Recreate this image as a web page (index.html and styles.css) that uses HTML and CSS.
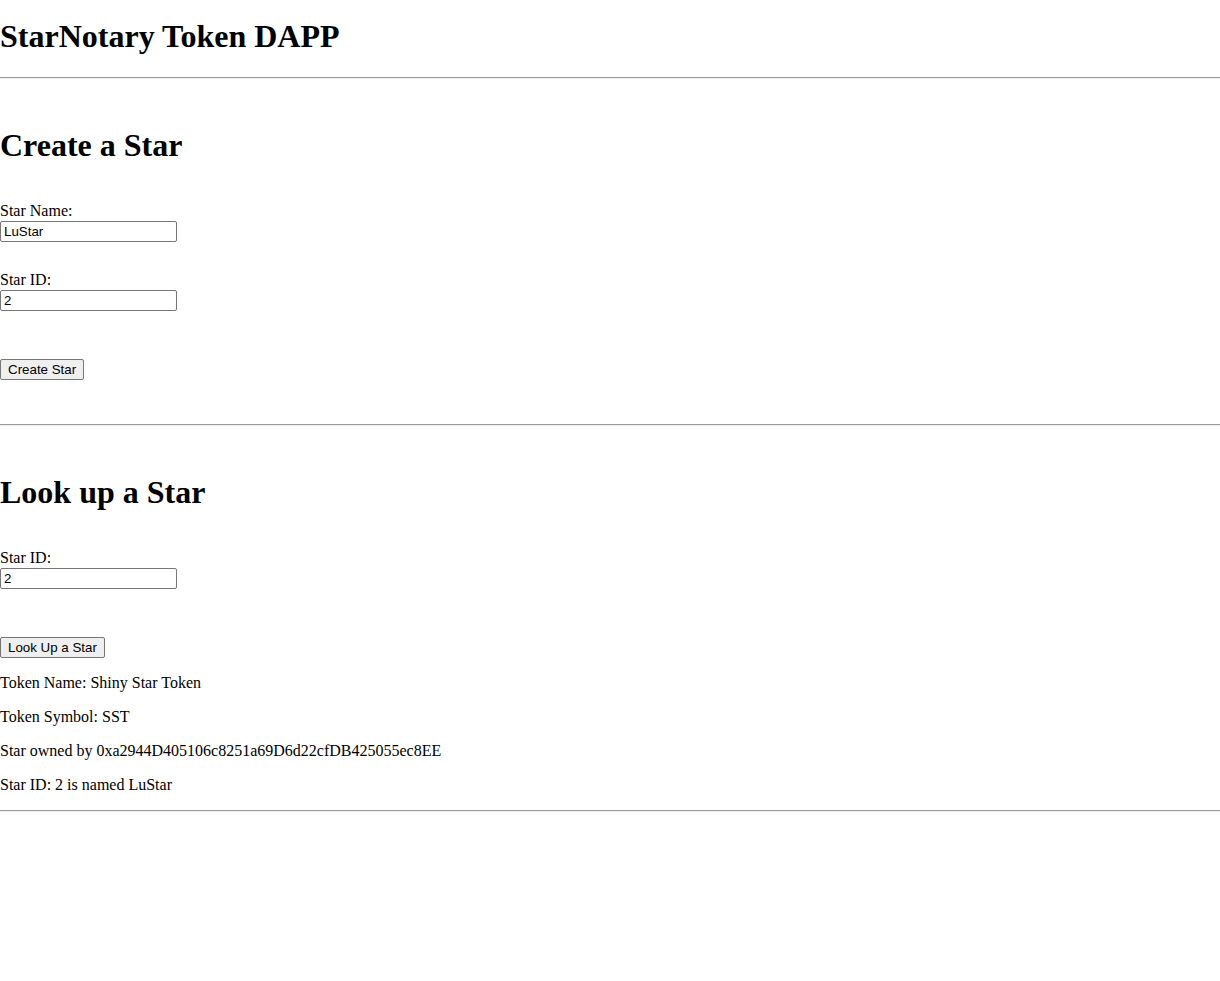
FILE: index.html
```html
<!DOCTYPE html>
<html lang="en">
<head>
<meta charset="utf-8">
<title>StarNotary Token DAPP</title>
<link rel="stylesheet" href="styles.css">
</head>
<body class="page">
  <header class="header">
    <h1 class="title">StarNotary Token DAPP</h1>
  </header>
  <hr class="rule">
  <section class="panel panel--create">
    <h2 class="section-title">Create a Star</h2>
    <div class="field-group field-group--first">
      <label class="field-label" for="starName">Star Name:</label>
      <input class="field" type="text" id="starName" value="LuStar">
    </div>
    <div class="field-group">
      <label class="field-label" for="starId">Star ID:</label>
      <input class="field" type="text" id="starId" value="2">
    </div>
    <div class="actions">
      <button class="btn" id="createStar" type="button">Create Star</button>
    </div>
  </section>
  <hr class="rule">
  <section class="panel">
    <h2 class="section-title">Look up a Star</h2>
    <div class="field-group field-group--first">
      <label class="field-label" for="lookid">Star ID:</label>
      <input class="field" type="text" id="lookid" value="2">
    </div>
    <div class="actions">
      <button class="btn" id="lookUp" type="button">Look Up a Star</button>
    </div>
    <div class="status-list">
      <p class="status">Token Name: Shiny Star Token</p>
      <p class="status">Token Symbol: SST</p>
      <p class="status">Star owned by 0xa2944D405106c8251a69D6d22cfDB425055ec8EE</p>
      <p class="status">Star ID: 2 is named LuStar</p>
    </div>
  </section>
  <hr class="rule">
</body>
</html>
```

FILE: styles.css
```css
.page {
  margin: 0;
  font-family: "Liberation Serif", "Times New Roman", serif;
  font-size: 16px;
  line-height: 18px;
  color: #000;
  background: #fff;
}

.title {
  font-size: 32px;
  line-height: 37px;
  font-weight: bold;
  margin: 18px 0 22px;
}

.section-title {
  font-size: 32px;
  line-height: 37px;
  font-weight: bold;
  margin: 48px 0 0;
}

.rule {
  margin: 0;
  border: 0;
  border-top: 1px solid #9a9a9a;
  border-bottom: 1px solid #eeeeee;
  height: 0;
}

.panel {
  margin: 0;
}

.panel--create {
  padding-bottom: 44px;
}

.field-group {
  display: flex;
  flex-direction: column;
  align-items: flex-start;
  margin-top: 29px;
}

.field-group--first {
  margin-top: 38px;
}

.field-label {
  display: block;
  line-height: 18px;
}

.field {
  display: block;
  font-family: "Liberation Sans", Arial, sans-serif;
  font-size: 13.333px;
  width: 177px;
  height: 21px;
  box-sizing: border-box;
  padding: 1px 3px;
  border: 1px solid #767676;
  border-radius: 2px;
  margin: 1px 0 0;
  color: #000;
  background: #fff;
}

.actions {
  display: flex;
  margin-top: 48px;
}

.btn {
  font-family: "Liberation Sans", Arial, sans-serif;
  font-size: 13.333px;
  height: 21px;
  box-sizing: border-box;
  padding: 1px 7px;
  border: 1px solid #767676;
  border-radius: 2px;
  background: #efefef;
  color: #000;
  margin: 0;
}

.status-list {
  margin: 0;
}

.status {
  margin: 16px 0;
}
```
